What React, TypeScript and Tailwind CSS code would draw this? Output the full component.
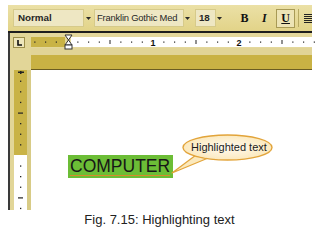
import React from 'react';

const TICK = 10.75;

function Arrow() {
  return (
    <div className="flex h-full w-[8px] items-center justify-center">
      <svg width="5" height="3" viewBox="0 0 5 3">
        <path d="M0 0 H5 L2.5 3 Z" fill="#2a2a2a" />
      </svg>
    </div>
  );
}

function Toolbar() {
  return (
    <div className="ml-[8px] mt-[5px] flex h-[26px] w-[304px] items-center overflow-hidden bg-gradient-to-b from-[#ebe0a6] to-[#e2d388] pl-[5px] text-[9.8px] text-[#262626]" style={{ fontFamily: '"Liberation Sans", Arial, sans-serif' }}>
      <div className="flex h-[18px] w-[72px] items-center border border-[#d6ca8a] bg-[#eee7c3] pl-[4px] font-semibold">Normal</div>
      <Arrow />
      <div className="ml-[2px] flex h-[18px] w-[91px] items-center whitespace-nowrap border border-[#d6ca8a] bg-[#eee7c3] pl-[2px] text-[9.4px] font-medium tracking-[-0.2px]">Franklin Gothic Med</div>
      <Arrow />
      <div className="ml-[3px] flex h-[18px] w-[21px] items-center border border-[#d6ca8a] bg-[#eee7c3] pl-[3px] font-semibold">18</div>
      <Arrow />
      <div className="ml-[13px] flex w-[16px] justify-center text-[12px] font-bold text-[#111]" style={{ fontFamily: '"Liberation Serif", serif' }}>B</div>
      <div className="ml-[4px] flex w-[16px] justify-center text-[12px] font-bold italic text-[#111]" style={{ fontFamily: '"Liberation Serif", serif' }}>I</div>
      <div className="ml-[4px] flex h-[19px] w-[19px] items-center justify-center border border-[#a89a55] bg-[#ede4b5] text-[12px] font-bold text-[#111] underline" style={{ fontFamily: '"Liberation Serif", serif' }}>U</div>
      <div className="ml-[3px] h-[18px] w-px bg-[#b8aa62]" />
      <div className="ml-[5px] flex flex-col gap-[1px]">
        <div className="h-px w-[8px] bg-[#222]" />
        <div className="h-px w-[8px] bg-[#222]" />
        <div className="h-px w-[8px] bg-[#222]" />
        <div className="h-px w-[8px] bg-[#222]" />
        <div className="h-px w-[8px] bg-[#222]" />
      </div>
    </div>
  );
}

function HRuler() {
  const ox = 36;
  const items: React.ReactNode[] = [];
  for (let i = -3; i <= 23; i++) {
    if (i === 0) continue;
    const x = ox + i * TICK;
    if (i % 8 === 0) {
      items.push(
        <text key={i} x={x} y={13} fontSize="9" fontWeight="bold" textAnchor="middle" fill="#111" fontFamily='"Liberation Sans", Arial, sans-serif'>
          {i / 8}
        </text>
      );
    } else if (i % 4 === 0) {
      items.push(<rect key={i} x={x - 0.5} y={7} width={1} height={4} fill="#222" />);
    } else {
      items.push(<rect key={i} x={x - 0.5} y={8.5} width={1.2} height={1.2} fill="#222" />);
    }
  }
  return (
    <div className="relative h-[15px] w-full bg-[#e4d89c]">
      <svg className="absolute left-0 top-0 overflow-visible" width="281" height="15" viewBox="0 0 281 15">
        <rect x="0" y="4" width="34" height="10" fill="#c9b346" />
        <rect x="40" y="4" width="241" height="10" fill="#ffffff" />
        {items}
        <path d="M34 2 H41 L37.5 7 Z" fill="#fff" stroke="#333" strokeWidth="1" />
        <path d="M37.5 7 L34 12 H41 Z" fill="#fff" stroke="#333" strokeWidth="1" />
        <rect x="34" y="12" width="7" height="4" fill="#fff" stroke="#333" strokeWidth="1" />
      </svg>
    </div>
  );
}

function VRuler() {
  const items: React.ReactNode[] = [];
  for (let i = 1; i <= 13; i++) {
    if (i === 8) continue;
    const y = 0.6 + i * 10.6;
    if (i % 4 === 0) {
      items.push(<rect key={i} x={4} y={y - 0.5} width={5} height={1.2} fill="#222" />);
    } else {
      items.push(<rect key={i} x={6} y={y - 0.6} width={1.3} height={1.3} fill="#222" />);
    }
  }
  return (
    <svg width="13" height="140" viewBox="0 0 13 140">
      <rect x="0" y="0" width="13" height="85" fill="#c9b346" />
      <rect x="0" y="85" width="13" height="55" fill="#ffffff" />
      <rect x="4" y="1.5" width="6" height="1.5" fill="#222" />
      <rect x="6" y="1" width="1.5" height="3" fill="#222" />
      {items}
    </svg>
  );
}

function Callout() {
  return (
    <div className="absolute left-[136px] top-[60px] h-[48px] w-[110px]">
      <svg className="absolute left-0 top-0" width="110" height="48" viewBox="0 0 110 48">
        <defs>
          <radialGradient id="cf" cx="50%" cy="50%" r="60%">
            <stop offset="0%" stopColor="#fffaf0" />
            <stop offset="100%" stopColor="#fbe6b4" />
          </radialGradient>
        </defs>
        <path d="M29 25 L5 43 L40 28.5 Z" fill="#fbe9bd" stroke="#e2a43a" strokeWidth="1.2" strokeLinejoin="round" />
        <ellipse cx="60.5" cy="17.5" rx="44.5" ry="12.5" fill="url(#cf)" stroke="#e2a43a" strokeWidth="1.4" />
        <path d="M30 25.5 L40 28 L38 26 Z" fill="#fbe9bd" />
      </svg>
      <div className="absolute left-[24px] top-[11px] whitespace-nowrap text-[11px] leading-[13px] text-[#1a1a1a]" style={{ fontFamily: '"Liberation Sans", Arial, sans-serif' }}>
        Highlighted text
      </div>
    </div>
  );
}

function Page() {
  return (
    <div className="relative h-[142px] flex-1 bg-white pl-[37px] pt-[85px]">
      <div className="flex h-[23px] w-[105px] items-center bg-[#6cbd36] pl-[2px]">
        <span className="border-b border-[#d88a2c] text-[17.5px] leading-[17px] text-[#161616]" style={{ fontFamily: '"Liberation Sans", Arial, sans-serif' }}>
          COMPUTER
        </span>
      </div>
      <Callout />
    </div>
  );
}

export default function App() {
  return (
    <div className="h-[235px] w-[319px] overflow-hidden bg-white">
      <Toolbar />
      <div className="ml-[8px] h-[2px] w-[304px] bg-[#1e1e1e]" />
      <div className="ml-[8px] flex w-[304px] border-l-2 border-[#3a3a3a]">
        <div className="flex w-[21px] flex-col bg-[#e2d698]">
          <div className="h-[37px] pl-[3px] pt-[4px]">
            <div className="flex h-[11px] w-[12px] items-center justify-center border border-[#9c8e4a] bg-[#eee6bb]">
              <svg width="5" height="6" viewBox="0 0 5 6">
                <path d="M1 0 V5 H5" fill="none" stroke="#111" strokeWidth="1.6" />
              </svg>
            </div>
          </div>
          <div className="flex flex-1 pl-[4px]">
            <VRuler />
            <div className="w-[4px] bg-[#d8cb86]" />
          </div>
        </div>
        <div className="flex flex-1 flex-col">
          <HRuler />
          <div className="h-[7px] bg-[#e1d497]" />
          <div className="h-[14px] bg-[#c9b244]" />
          <div className="h-px bg-[#6b5d22]" />
          <Page />
        </div>
      </div>
      <div className="mt-[2px] text-center text-[13px] leading-[16px] text-[#222]" style={{ fontFamily: '"Liberation Sans", Arial, sans-serif' }}>
        Fig. 7.15: Highlighting text
      </div>
    </div>
  );
}
